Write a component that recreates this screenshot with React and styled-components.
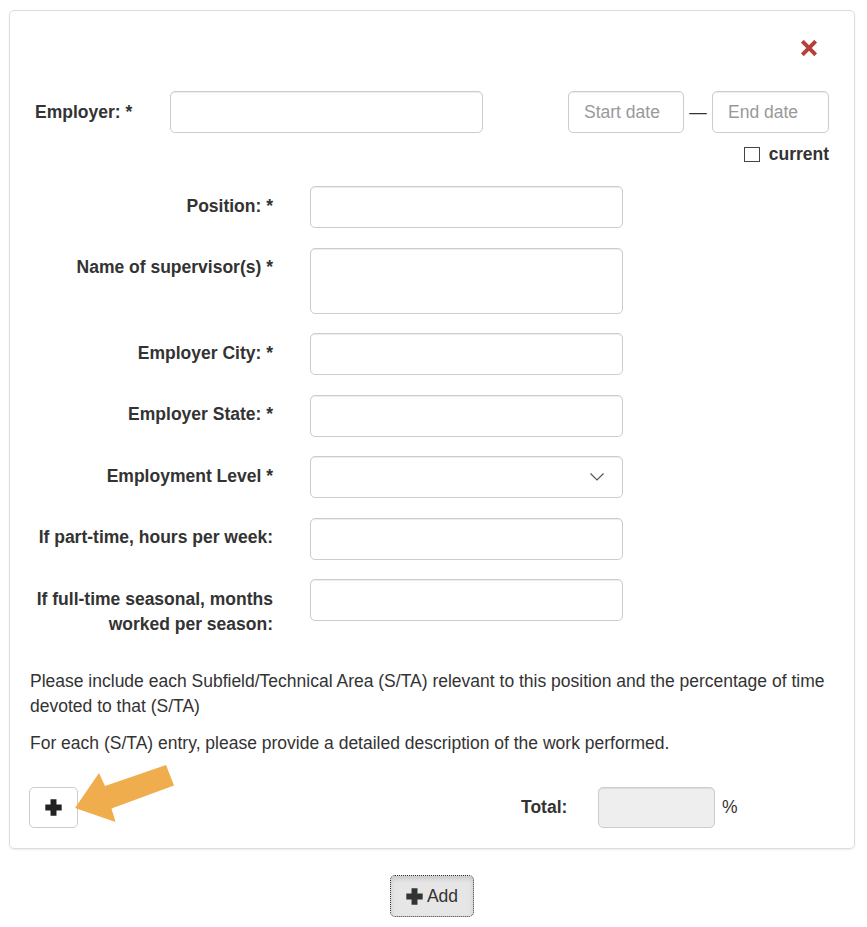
import React from "react";
import styled, { createGlobalStyle } from "styled-components";

const GlobalStyle = createGlobalStyle`
  html, body { margin: 0; padding: 0; background: #fff; }
  body {
    font-family: "Liberation Sans", Arial, Helvetica, sans-serif;
    font-size: 17.5px;
    line-height: 25px;
    color: #333;
  }
  * { box-sizing: border-box; }
`;

const Page = styled.div`
  width: 867px;
  padding: 10px 12px 10px 9px;
`;

const Panel = styled.section`
  position: relative;
  border: 1px solid #ddd;
  border-radius: 5px;
  box-shadow: 0 1px 2px rgba(0, 0, 0, 0.08);
  padding: 0 25px 20px 20px;
`;

const TopBar = styled.div`
  display: flex;
  justify-content: flex-end;
  height: 80px;
  padding-top: 29px;
  padding-right: 12px;
`;

const CloseButton = styled.button`
  width: 16px;
  height: 16px;
  padding: 0;
  border: 0;
  background: none;
  display: flex;
  cursor: pointer;
`;

const EmployerRow = styled.div`
  display: flex;
  align-items: center;
  height: 42px;
`;

const EmployerLabel = styled.label`
  width: 135px;
  margin-left: 5px;
  font-weight: bold;
`;

const TextInput = styled.input`
  height: ${(p) => p.$h || 42}px;
  width: ${(p) => p.$w || 313}px;
  border: 1px solid #ccc;
  border-radius: 5px;
  padding: 7px 15px;
  font-family: inherit;
  font-size: 17.5px;
  color: #555;
  background: ${(p) => (p.$readonly ? "#eee" : "#fff")};
  box-shadow: inset 0 1px 1px rgba(0, 0, 0, 0.075);
  &::placeholder { color: #999; }
`;

const TextArea = styled.textarea`
  height: 66px;
  width: 313px;
  border: 1px solid #ccc;
  border-radius: 5px;
  padding: 7px 15px;
  font-family: inherit;
  font-size: 17.5px;
  resize: none;
  box-shadow: inset 0 1px 1px rgba(0, 0, 0, 0.075);
`;

const Spacer = styled.div`
  flex: 1;
`;

const DateGroup = styled.div`
  display: flex;
  align-items: center;
`;

const Dash = styled.span`
  width: 28px;
  text-align: center;
  color: #333;
`;

const CurrentRow = styled.div`
  display: flex;
  justify-content: flex-end;
  align-items: center;
  height: 25px;
  margin-top: 8.5px;
  gap: 9px;
`;

const Checkbox = styled.span`
  width: 16px;
  height: 15px;
  border: 1px solid #444;
  background: #fff;
  display: inline-block;
`;

const BoldText = styled.span`
  font-weight: bold;
`;

const Fields = styled.div`
  display: flex;
  flex-direction: column;
  gap: 19.5px;
  margin-top: 19.5px;
`;

const FieldRow = styled.div`
  display: grid;
  grid-template-columns: 243px 313px;
  column-gap: 37px;
  align-items: start;
`;

const FieldLabel = styled.label`
  text-align: right;
  font-weight: bold;
  padding-top: 7.5px;
  line-height: 25px;
`;

const SelectBox = styled.div`
  position: relative;
  height: 42px;
  width: 313px;
  border: 1px solid #ccc;
  border-radius: 5px;
  box-shadow: inset 0 1px 1px rgba(0, 0, 0, 0.075);
  display: flex;
  align-items: center;
  justify-content: flex-end;
  padding-right: 18px;
`;

const Notes = styled.div`
  margin-top: 32px;
  margin-right: -12px;
`;

const Note = styled.p`
  margin: 0 0 12.5px;
`;

const Footer = styled.div`
  position: relative;
  display: flex;
  align-items: center;
  margin-top: 31px;
  margin-left: -1px;
`;

const PlusButton = styled.button`
  width: 49px;
  height: 41px;
  border: 1px solid #ccc;
  border-radius: 5px;
  background: #fff;
  display: flex;
  align-items: center;
  justify-content: center;
  padding: 0;
`;

const TotalGroup = styled.div`
  display: flex;
  align-items: center;
  margin-left: 443px;
`;

const TotalLabel = styled.label`
  font-weight: bold;
  width: 77px;
`;

const Percent = styled.span`
  margin-left: 7px;
`;

const ArrowOverlay = styled.svg`
  position: absolute;
  left: 40px;
  top: -28px;
  pointer-events: none;
`;

const BottomBar = styled.div`
  display: flex;
  justify-content: center;
  margin-top: 26px;
`;

const AddButton = styled.button`
  height: 42px;
  width: 84px;
  border: 1px dotted #333;
  border-radius: 5px;
  background: #e6e6e6;
  box-shadow: inset 0 3px 5px rgba(0, 0, 0, 0.125);
  display: flex;
  align-items: center;
  justify-content: center;
  gap: 4px;
  font-family: inherit;
  font-size: 17.5px;
  color: #333;
  padding: 0;
`;

const PlusIcon = ({ size = 16, color = "#222" }) => (
  <svg width={size} height={size} viewBox="0 0 16 16">
    <path d="M5.2 0.3h5.6v4.9h4.9v5.6h-4.9v4.9H5.2v-4.9H0.3V5.2h4.9z" fill={color} />
  </svg>
);

const CloseIcon = () => (
  <svg width="16" height="16" viewBox="0 0 16 16">
    <g fill="#b5403c">
      <rect x="6" y="-1.5" width="4" height="19" rx="0.6" transform="rotate(45 8 8)" />
      <rect x="6" y="-1.5" width="4" height="19" rx="0.6" transform="rotate(-45 8 8)" />
    </g>
  </svg>
);

const Chevron = () => (
  <svg width="14" height="8" viewBox="0 0 14 8">
    <polyline points="0.5,0.5 7,7 13.5,0.5" fill="none" stroke="#555" strokeWidth="1.2" />
  </svg>
);

const fields = [
  { label: "Position: *" },
  { label: "Name of supervisor(s) *", area: true },
  { label: "Employer City: *" },
  { label: "Employer State: *" },
  { label: "Employment Level *", select: true },
  { label: "If part-time, hours per week:" },
  { label: "If full-time seasonal, months worked per season:" },
];

export default function App() {
  return (
    <Page>
      <GlobalStyle />
      <Panel>
        <TopBar>
          <CloseButton aria-label="remove">
            <CloseIcon />
          </CloseButton>
        </TopBar>

        <EmployerRow>
          <EmployerLabel>Employer: *</EmployerLabel>
          <TextInput />
          <Spacer />
          <DateGroup>
            <TextInput $w={116} placeholder="Start date" />
            <Dash>—</Dash>
            <TextInput $w={117} placeholder="End date" />
          </DateGroup>
        </EmployerRow>

        <CurrentRow>
          <Checkbox />
          <BoldText>current</BoldText>
        </CurrentRow>

        <Fields>
          {fields.map((f) => (
            <FieldRow key={f.label}>
              <FieldLabel>{f.label}</FieldLabel>
              {f.area ? (
                <TextArea />
              ) : f.select ? (
                <SelectBox>
                  <Chevron />
                </SelectBox>
              ) : (
                <TextInput />
              )}
            </FieldRow>
          ))}
        </Fields>

        <Notes>
          <Note>
            Please include each Subfield/Technical Area (S/TA) relevant to this position and the
            percentage of time devoted to that (S/TA)
          </Note>
          <Note>For each (S/TA) entry, please provide a detailed description of the work performed.</Note>
        </Notes>

        <Footer>
          <PlusButton aria-label="add entry">
            <PlusIcon size={17} color="#222" />
          </PlusButton>
          <TotalGroup>
            <TotalLabel>Total:</TotalLabel>
            <TextInput $w={117} $h={41} $readonly readOnly />
            <Percent>%</Percent>
          </TotalGroup>
          <ArrowOverlay width="110" height="70" viewBox="70 760 110 70">
            <polygon
              points="76,809 100,774 106,787 167,766 175,786.5 112.5,809.5 116.5,823"
              fill="#f0ad4e"
            />
          </ArrowOverlay>
        </Footer>
      </Panel>

      <BottomBar>
        <AddButton>
          <PlusIcon size={17} color="#333" />
          Add
        </AddButton>
      </BottomBar>
    </Page>
  );
}
